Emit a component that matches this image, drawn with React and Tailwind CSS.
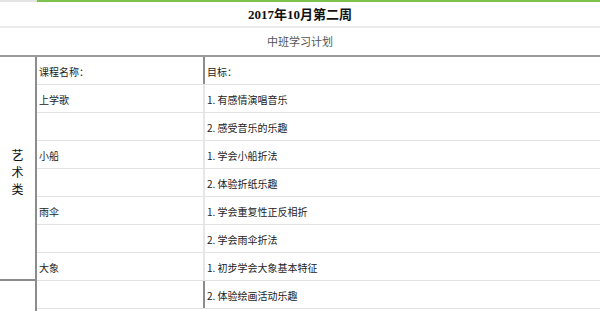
import React from 'react';

const rows = [
  { name: '课程名称：', goal: '目标：', mid: 'border-[#8c8c8c]' },
  { name: '上学歌', goal: '1. 有感情演唱音乐', mid: 'border-[#e6e6e6]' },
  { name: '', goal: '2. 感受音乐的乐趣', mid: 'border-[#e6e6e6]' },
  { name: '小船', goal: '1. 学会小船折法', mid: 'border-[#e6e6e6]' },
  { name: '', goal: '2. 体验折纸乐趣', mid: 'border-[#e6e6e6]' },
  { name: '雨伞', goal: '1. 学会重复性正反相折', mid: 'border-[#e6e6e6]' },
  { name: '', goal: '2. 学会雨伞折法', mid: 'border-[#e6e6e6]' },
  { name: '大象', goal: '1. 初步学会大象基本特征', mid: 'border-[#e6e6e6]' },
  { name: '', goal: '2. 体验绘画活动乐趣', mid: 'border-[#8c8c8c]' },
];

const App = () => {
  return (
    <div className="w-[600px] h-[311px] overflow-hidden bg-white text-[#222] font-['Noto_Sans_CJK_SC',sans-serif]">
      {/* top accent line */}
      <div className="flex h-[2px]">
        <div className="w-[37px] bg-[#e4e4e4]"></div>
        <div className="flex-1 bg-[#7dc24e]"></div>
      </div>
      <div className="h-[26px] flex items-center justify-center pt-[2px] border-b-2 border-[#ebebeb] text-[13px] font-bold text-[#111] font-['Liberation_Serif','Noto_Sans_CJK_SC',serif]">
        2017年10月第二周
      </div>
      <div className="h-[29px] flex items-center justify-center border-b-2 border-[#9a9a9a] text-[11px] text-[#555]">
        中班学习计划
      </div>

      <div className="flex">
        <div className="w-[37px] shrink-0 border-r-2 border-[#8c8c8c] flex flex-col">
          <div className="h-[224px] border-b-2 border-[#8c8c8c] flex flex-col items-center justify-center text-[12px] leading-[17px] text-[#111] pt-[6px]">
            <span className="block h-[17px]">艺</span>
            <span className="block h-[17px]">术</span>
            <span className="block h-[17px]">类</span>
          </div>
          <div className="h-[40px]"></div>
        </div>
        <div className="flex-1 flex flex-col">
          {rows.map((r, i) => (
            <div key={i} className="h-[28px] flex border-b border-[#e2e2e2] text-[10px]">
              <div className={`w-[168px] shrink-0 border-r-2 ${r.mid} flex items-center pl-[2px] pt-[1px]`}>{r.name}</div>
              <div className="flex-1 flex items-center pl-[2px] pt-[1px]">{r.goal}</div>
            </div>
          ))}
        </div>
      </div>
    </div>
  );
};

export default App;
